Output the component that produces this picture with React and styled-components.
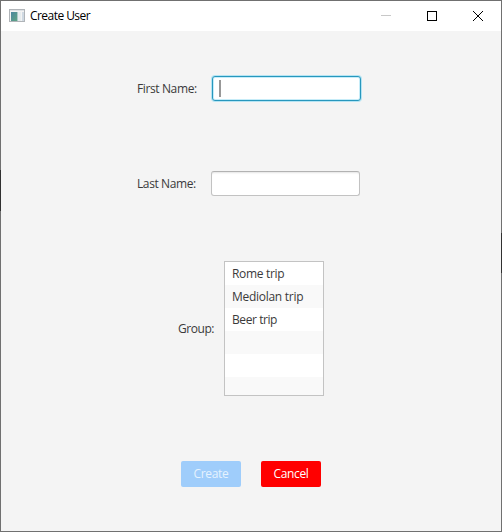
import React from "react";
import styled, { createGlobalStyle } from "styled-components";

const GlobalStyle = createGlobalStyle`
  * { box-sizing: border-box; }
  body { margin: 0; overflow: hidden; }
`;

const Window = styled.main`
  width: 502px;
  height: 532px;
  border: 1px solid transparent;
  background:
    linear-gradient(#f4f4f4, #f4f4f4) padding-box,
    linear-gradient(#707070 170px, #303030 170px 211px, #707070 211px) 0 0 / 251px 100% no-repeat border-box,
    linear-gradient(#707070 233px, #303030 233px 273px, #707070 273px) 100% 0 / 251px 100% no-repeat border-box;
  font: 12px/16px "Open Sans", "Noto Sans", sans-serif;
  color: #3a3a3a;
  display: flex;
  flex-direction: column;
`;

const TitleBar = styled.header`
  height: 30px;
  flex: none;
  background: #fff;
  color: #000;
  display: flex;
  align-items: center;
  padding-left: 8px;
`;

const Title = styled.h1`
  margin: 0 auto 0 5px;
  font-size: 12px;
  font-weight: 400;
  white-space: nowrap;
  letter-spacing: -0.55px;
`;

const WindowButton = styled.button`
  width: 46px;
  height: 30px;
  padding: 0;
  border: 0;
  background: none;
  display: grid;
  place-items: center;
`;

const Glyph = styled.svg`
  display: block;
`;

const Form = styled.form`
  display: flex;
  flex-direction: column;
  align-items: flex-start;
`;

const FieldRow = styled.div`
  display: flex;
  align-items: center;
  height: ${({ $height }) => $height}px;
  margin: ${({ $top }) => $top}px 0 0 ${({ $left }) => $left}px;
`;

const Label = styled.label`
  width: ${({ $width }) => $width}px;
  flex: none;
  white-space: nowrap;
  letter-spacing: ${({ $spacing }) => $spacing}px;
`;

const TextField = styled.div`
  width: 149px;
  height: 25px;
  padding: 4px 7px;
  border: 1px solid ${({ $focused }) => ($focused ? "#2797bd" : "#c2c2c2")};
  border-top-color: ${({ $focused }) => ($focused ? "#2797bd" : "#b2b2b2")};
  border-radius: 3px;
  background: #fff;
  box-shadow: ${({ $focused }) =>
    $focused ? "0 0 0 1px #b5e4f3, inset 0 0 0 1px #c6ecf8" : "inset 0 2px 2px -1px #e4e4e4"};
`;

const Caret = styled.div`
  width: 2px;
  height: 17px;
  margin: -1px 0 0 -1px;
  background: #989898;
`;

const GroupList = styled.ul`
  width: 100px;
  height: 135px;
  margin: 0;
  padding: 0;
  list-style: none;
  overflow: hidden;
  border: 1px solid #c3c3c3;
  background: #fff;
`;

const GroupItem = styled.li`
  height: 23px;
  padding: 4px 7px;
  white-space: nowrap;
  letter-spacing: ${({ $spacing = 0 }) => $spacing}px;

  &:nth-child(even) { background: #f9f9f9; }
`;

const Actions = styled.div`
  display: flex;
  gap: 20px;
  margin: 65px 0 0 180px;
`;

const ActionButton = styled.button`
  width: 60px;
  height: 26px;
  padding: 0 0 1px;
  border: 0;
  border-radius: 2px;
  background: ${({ $color }) => $color};
  color: ${({ $text }) => $text};
  font: inherit;
  letter-spacing: ${({ $spacing }) => $spacing}px;
`;

const GROUPS = [
  { name: "Rome trip", spacing: -0.33 },
  { name: "Mediolan trip", spacing: -0.28 },
  { name: "Beer trip", spacing: -0.42 },
  {}, {}, {},
];

function AppIcon() {
  return (
    <Glyph width="16" height="14" viewBox="0 0 16 14">
      <defs>
        <linearGradient id="pane" x1="0" y1="0" x2="1" y2="1">
          <stop offset="0" stopColor="#4a86a0" />
          <stop offset="1" stopColor="#5fa483" />
        </linearGradient>
      </defs>
      <rect x="0.5" y="0.5" width="15" height="12" fill="#f3f3f3" stroke="#b0b4b8" />
      <rect x="1" y="1" width="14" height="1" fill="#dde1e4" />
      <rect x="2" y="3" width="6" height="9" fill="url(#pane)" />
      <rect x="8" y="3" width="1" height="9" fill="#a9c8c8" />
      <rect x="9" y="3" width="3" height="9" fill="#e6ecee" />
      <rect x="13" y="3" width="2" height="9" fill="#cfd9e2" />
    </Glyph>
  );
}

export default function App() {
  return (
    <>
      <GlobalStyle />
      <Window>
        <TitleBar>
          <AppIcon />
          <Title>Create User</Title>
          <WindowButton type="button" aria-label="Minimize">
            <Glyph width="10" height="10"><path d="M0 4.5h10" stroke="#c8c8c8" /></Glyph>
          </WindowButton>
          <WindowButton type="button" aria-label="Maximize">
            <Glyph width="10" height="10"><rect x=".5" y=".5" width="9" height="9" fill="none" stroke="#000" /></Glyph>
          </WindowButton>
          <WindowButton type="button" aria-label="Close">
            <Glyph width="10" height="10"><path d="M0 0l10 10M10 0L0 10" stroke="#000" /></Glyph>
          </WindowButton>
        </TitleBar>
        <Form>
          <FieldRow $top={45} $left={136} $height={25}>
            <Label $width={75} $spacing={-0.38}>First Name:</Label>
            <TextField $focused><Caret /></TextField>
          </FieldRow>
          <FieldRow $top={70} $left={136} $height={25}>
            <Label $width={74} $spacing={-0.4}>Last Name:</Label>
            <TextField />
          </FieldRow>
          <FieldRow $top={65} $left={177} $height={135}>
            <Label $width={46} $spacing={-0.45}>Group:</Label>
            <GroupList>
              {GROUPS.map((group, i) => (
                <GroupItem key={i} $spacing={group.spacing}>{group.name}</GroupItem>
              ))}
            </GroupList>
          </FieldRow>
          <Actions>
            <ActionButton type="button" disabled $color="#9fcdfb" $text="#e5f2fe" $spacing={-0.3}>Create</ActionButton>
            <ActionButton type="button" $color="#ff0000" $text="#fff" $spacing={-0.35}>Cancel</ActionButton>
          </Actions>
        </Form>
      </Window>
    </>
  );
}
